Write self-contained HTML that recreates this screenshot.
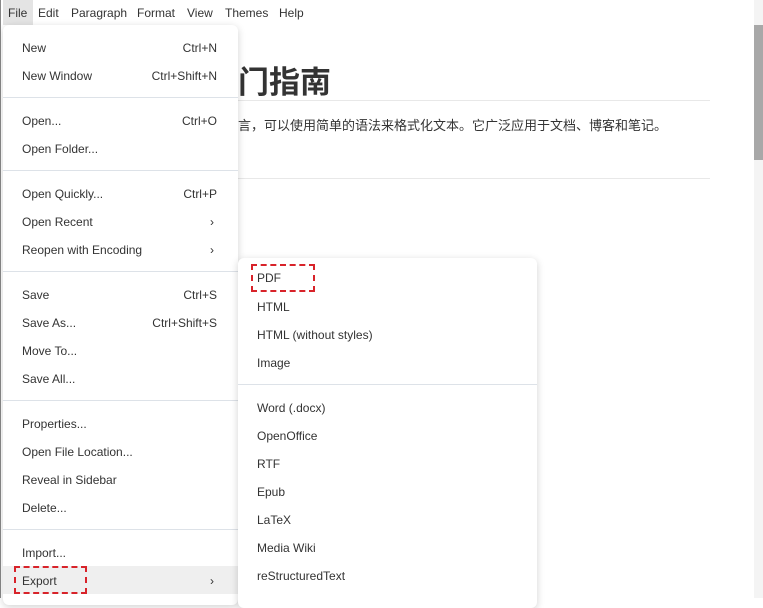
<!DOCTYPE html>
<html><head><meta charset="utf-8"><style>
*{margin:0;padding:0;box-sizing:border-box}
body{width:763px;height:598px;overflow:hidden;background:#fff;position:relative;font-family:"Liberation Sans","Noto Sans CJK SC",sans-serif;font-size:12px;color:#333}
.a{position:absolute;white-space:nowrap}
.bar span{position:absolute;top:6px;font-size:12px;color:#333}
.menu{position:absolute;background:#fff;box-shadow:0 2px 8px rgba(0,0,0,.18);border-radius:6px}
.it{position:absolute;left:0;right:0;height:28px;line-height:30px;padding-left:19px;font-size:12px;color:#333}
.it .k{position:absolute;right:21px;top:0}
.it .c{position:absolute;right:24px;top:0}
.sep{position:absolute;left:0;right:0;height:1px;background:#dde2e8}
.red{position:absolute;border:2px dashed #d8232a}
</style></head><body>
<div class="a" style="left:0;top:0;width:1px;height:598px;background:#888"></div>
<div class="a" style="left:754px;top:0;width:9px;height:598px;background:#f4f4f4"></div>
<div class="a" style="left:754px;top:25px;width:9px;height:135px;background:#a8a8a8"></div>
<div class="a" style="left:3px;top:0;width:30px;height:25px;background:#e4e4e4"></div>
<div class="bar">
<span style="left:8px">File</span><span style="left:38px">Edit</span><span style="left:71px">Paragraph</span><span style="left:137px">Format</span><span style="left:187px">View</span><span style="left:225px">Themes</span><span style="left:279px">Help</span>
</div>
<div class="a" style="left:207px;top:62px;font-size:31px;font-weight:bold;color:#333;line-height:42px">入门指南</div>
<div class="a" style="left:238px;top:100px;width:472px;height:1px;background:#e8e8e8"></div>
<div class="a" style="left:225px;top:117px;font-size:13px;line-height:18px">语言，可以使用简单的语法来格式化文本。它广泛应用于文档、博客和笔记。</div>
<div class="a" style="left:238px;top:178px;width:472px;height:1px;background:#e8e8e8"></div>

<div class="menu" style="left:3px;top:25px;width:235px;height:580px">
<div class="it" style="top:8px">New<span class="k">Ctrl+N</span></div>
<div class="it" style="top:36px">New Window<span class="k">Ctrl+Shift+N</span></div>
<div class="sep" style="top:72px"></div>
<div class="it" style="top:81px">Open...<span class="k">Ctrl+O</span></div>
<div class="it" style="top:109px">Open Folder...</div>
<div class="sep" style="top:145px"></div>
<div class="it" style="top:154px">Open Quickly...<span class="k">Ctrl+P</span></div>
<div class="it" style="top:182px">Open Recent<span class="c">›</span></div>
<div class="it" style="top:210px">Reopen with Encoding<span class="c">›</span></div>
<div class="sep" style="top:246px"></div>
<div class="it" style="top:255px">Save<span class="k">Ctrl+S</span></div>
<div class="it" style="top:283px">Save As...<span class="k">Ctrl+Shift+S</span></div>
<div class="it" style="top:311px">Move To...</div>
<div class="it" style="top:339px">Save All...</div>
<div class="sep" style="top:375px"></div>
<div class="it" style="top:384px">Properties...</div>
<div class="it" style="top:412px">Open File Location...</div>
<div class="it" style="top:440px">Reveal in Sidebar</div>
<div class="it" style="top:468px">Delete...</div>
<div class="sep" style="top:504px"></div>
<div class="it" style="top:513px">Import...</div>
<div class="it" style="top:541px;background:#efefef">Export<span class="c">›</span></div>
</div>
<div class="red" style="left:14px;top:566px;width:73px;height:28px"></div>

<div class="menu" style="left:238px;top:258px;width:299px;height:350px">
<div class="it" style="top:5px">PDF</div>
<div class="it" style="top:34px">HTML</div>
<div class="it" style="top:62px">HTML (without styles)</div>
<div class="it" style="top:90px">Image</div>
<div class="sep" style="top:126px"></div>
<div class="it" style="top:135px">Word (.docx)</div>
<div class="it" style="top:163px">OpenOffice</div>
<div class="it" style="top:191px">RTF</div>
<div class="it" style="top:219px">Epub</div>
<div class="it" style="top:247px">LaTeX</div>
<div class="it" style="top:275px">Media Wiki</div>
<div class="it" style="top:303px">reStructuredText</div>
</div>
<div class="red" style="left:251px;top:264px;width:64px;height:28px"></div>
</body></html>
